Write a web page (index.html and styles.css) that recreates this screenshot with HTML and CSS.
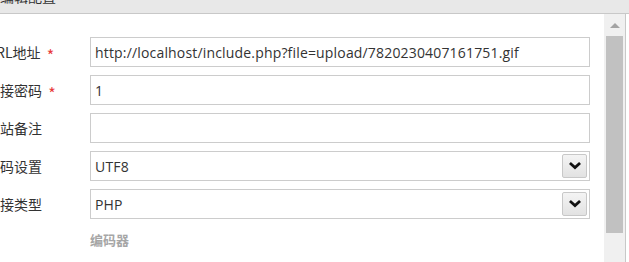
FILE: index.html
```html
<!DOCTYPE html>
<html lang="zh">
<head>
<meta charset="utf-8">
<link rel="stylesheet" href="styles.css">
</head>
<body>
<div class="dialog">
  <div class="header">
    <span class="title">编辑配置</span>
    <span class="close">×</span>
  </div>
  <div class="main">
    <div class="content">
      <form class="form">
        <div class="row">
          <label class="label">URL地址 <span class="req">*</span></label>
          <div class="field input">http://localhost/include.php?file=upload/7820230407161751.gif</div>
        </div>
        <div class="row">
          <label class="label">连接密码 <span class="req">*</span></label>
          <div class="field input">1</div>
        </div>
        <div class="row">
          <label class="label">网站备注</label>
          <div class="field input"></div>
        </div>
        <div class="row">
          <label class="label">编码设置</label>
          <div class="field select"><span>UTF8</span><span class="arrow"><svg width="12" height="8" viewBox="0 0 12 8"><path d="M2 2 L6 5.6 L10 2" fill="none" stroke="#111" stroke-width="2.8" stroke-linecap="square"/></svg></span></div>
        </div>
        <div class="row">
          <label class="label">连接类型</label>
          <div class="field select"><span>PHP</span><span class="arrow"><svg width="12" height="8" viewBox="0 0 12 8"><path d="M2 2 L6 5.6 L10 2" fill="none" stroke="#111" stroke-width="2.8" stroke-linecap="square"/></svg></span></div>
        </div>
        <div class="row hint-row">
          <span class="label"></span>
          <span class="hint">编码器</span>
        </div>
      </form>
    </div>
    <div class="scrollbar">
      <div class="up"></div>
      <div class="thumb"></div>
    </div>
    <div class="edge"></div>
  </div>
</div>
</body>
</html>
```

FILE: styles.css
```css
html, body {
  margin: 0;
  padding: 0;
  background: #fff;
  overflow: hidden;
}
body {
  font-family: "Open Sans", "Noto Sans CJK SC", sans-serif;
  font-size: 14px;
  color: #333;
}
.dialog {
  width: 629px;
  height: 262px;
  display: flex;
  flex-direction: column;
}
.header {
  height: 13px;
  background: #e8e8e8;
  border-bottom: 1px solid #c8c8c8;
  overflow: hidden;
  display: flex;
  justify-content: space-between;
  line-height: 14px;
}
.title {
  margin-top: -11px;
  margin-left: 0;
  font-family: "Noto Sans CJK SC", sans-serif;
  font-size: 14px;
  color: #333;
}
.close {
  margin-top: -12px;
  margin-right: 13px;
  color: #555;
  font-size: 16px;
}
.main {
  flex: 1;
  display: flex;
  min-height: 0;
}
.content {
  width: 604px;
  overflow: hidden;
}
.form {
  margin-left: -14px;
  padding-top: 23px;
  display: flex;
  flex-direction: column;
  gap: 8px;
}
.row {
  display: flex;
  align-items: center;
  height: 30px;
}
.label {
  width: 104px;
  flex: none;
  font-family: "Noto Sans CJK SC", sans-serif;
  font-size: 14px;
  color: #333;
  white-space: nowrap;
}
.req {
  color: #e83a3a;
  margin-left: 3px;
  font-size: 16px;
  line-height: 1;
  vertical-align: -4px;
}
.field {
  box-sizing: border-box;
  width: 500px;
  height: 30px;
  border: 1px solid #cccccc;
  background: #fff;
  padding: 0 4px;
  display: flex;
  align-items: center;
  justify-content: space-between;
  font-size: 14px;
  letter-spacing: 0.17px;
  color: #333;
  white-space: nowrap;
}
.select {
  padding-right: 2px;
}
.arrow {
  box-sizing: border-box;
  width: 25px;
  height: 24px;
  border: 1px solid #c8c8c8;
  border-radius: 2px;
  background: linear-gradient(#f4f4f4, #e2e2e2);
  display: flex;
  align-items: center;
  justify-content: center;
}
.arrow svg {
  display: block;
}
.hint-row {
  height: 22px;
  margin-top: 1px;
}
.hint {
  font-family: "Noto Sans CJK SC", sans-serif;
  font-size: 13px;
  font-weight: bold;
  color: #a6a6a6;
}
.scrollbar {
  width: 21px;
  background: #f0f0f0;
  display: flex;
  flex-direction: column;
  align-items: flex-start;
}
.up {
  height: 22px;
  width: 17px;
  margin-left: 2px;
  display: flex;
  align-items: center;
  justify-content: center;
}
.up::after {
  content: "";
  width: 0;
  height: 0;
  border-left: 5px solid transparent;
  border-right: 5px solid transparent;
  border-bottom: 5px solid #a3a3a3;
}
.thumb {
  margin-left: 2px;
  width: 17px;
  height: 197px;
  background: #c1c1c1;
}
.edge {
  width: 1px;
  background: #c8c8c8;
  margin-right: 3px;
}
```
